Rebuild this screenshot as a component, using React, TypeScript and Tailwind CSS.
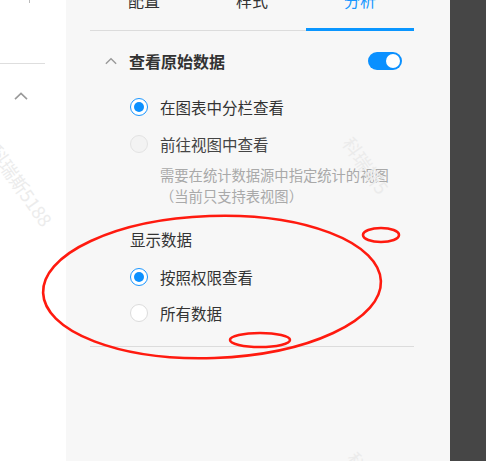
import React from "react";

const font = { fontFamily: '"Noto Sans CJK SC", "Noto Sans", sans-serif' };

function Radio({ checked, disabled, label }: { checked?: boolean; disabled?: boolean; label: string }) {
  return (
    <div className="flex items-center h-[22px] gap-3">
      <span
        className={
          "w-[18px] h-[18px] rounded-full border flex items-center justify-center shrink-0 " +
          (checked
            ? "border-[#1a96ff] bg-white"
            : disabled
            ? "border-[#e3e3e3] bg-[#f3f3f3]"
            : "border-[#dcdcdc] bg-white")
        }
      >
        {checked && <span className="w-[10px] h-[10px] rounded-full bg-[#0a90ff]" />}
      </span>
      <span className={"text-[15.5px] leading-[22px] " + (disabled ? "text-[#444]" : "text-[#333]")}>{label}</span>
    </div>
  );
}

function ChevronUp({ className }: { className?: string }) {
  return (
    <svg viewBox="0 0 14 8" className={className} fill="none" stroke="currentColor" strokeWidth="1.6">
      <path d="M1 7.2 L7 1.4 L13 7.2" />
    </svg>
  );
}

export default function App() {
  return (
    <div className="relative w-[486px] h-[461px] overflow-hidden flex bg-white" style={font}>
      {/* left panel */}
      <div className="w-[66px] shrink-0 bg-white relative">
        <div className="absolute left-[29px] top-0 w-px h-[3px] bg-[#bbb]" />
        <div className="mt-[63px] w-[45px] h-px bg-[#dedede]" />
        <div className="pl-[14px] pt-[28px] text-[#9a9a9a]">
          <ChevronUp className="w-[14px] h-[8px]" />
        </div>
      </div>

      {/* middle panel */}
      <div className="w-[384px] shrink-0 bg-[#f7f7f7] pl-6 pr-9">
        {/* tabs */}
        <div className="mt-[-11px] flex border-b border-[#dcdcdc]">
          {["配置", "样式", "分析"].map((t, i) => (
            <div
              key={t}
              className={
                "relative flex-1 h-[41px] text-center text-[16px] leading-[22px] " +
                (i === 2 ? "text-[#1896ff]" : "text-[#333]")
              }
            >
              {t}
              {i === 2 && <span className="absolute left-0 right-0 bottom-[-1px] h-[3px] bg-[#0a96ff]" />}
            </div>
          ))}
        </div>

        {/* section */}
        <div className="pl-[15px]">
          <div className="mt-[18px] h-6 flex items-center">
            <ChevronUp className="w-[12px] h-[8px] text-[#999] mr-3" />
            <span className="text-[16px] font-semibold text-[#333] leading-6">查看原始数据</span>
            <div className="ml-auto mr-[12px] w-[34px] h-[18px] rounded-full bg-[#0a90ff] flex items-center justify-end pr-[2px]">
              <span className="w-[14px] h-[14px] rounded-full bg-white" />
            </div>
          </div>

          <div className="pl-[25px]">
            <div className="mt-[23px]">
              <Radio checked label="在图表中分栏查看" />
            </div>
            <div className="mt-[15px]">
              <Radio disabled label="前往视图中查看" />
            </div>
            <div className="mt-[9px] pl-[30px] text-[14.3px] leading-[21px] text-[#a9a9a9]">
              <div>需要在统计数据源中指定统计的视图</div>
              <div>（当前只支持表视图）</div>
            </div>

            <div className="mt-[22px] text-[15.5px] leading-[22px] text-[#333]">显示数据</div>
            <div className="mt-[16px]">
              <Radio checked label="按照权限查看" />
            </div>
            <div className="mt-[14px]">
              <Radio label="所有数据" />
            </div>
          </div>
        </div>
        <div className="mt-[22px] h-px bg-[#dcdcdc]" />
      </div>

      {/* right dark panel */}
      <div className="flex-1 bg-[#464646]" />

      {/* watermarks */}
      <span className="absolute left-[-26px] top-[172px] rotate-[55deg] text-[18px] text-[#ececec] whitespace-nowrap pointer-events-none">
        科瑞斯5188
      </span>
      <span className="absolute left-[334px] top-[152px] rotate-[55deg] text-[18px] text-[#ebebeb] whitespace-nowrap pointer-events-none">
        科瑞斯5
      </span>
      <span className="absolute left-[348px] top-[448px] rotate-[55deg] text-[18px] text-[#ebebeb] whitespace-nowrap pointer-events-none">
        科
      </span>

      {/* red annotation marks */}
      <svg className="absolute inset-0 pointer-events-none" width="486" height="461" fill="none" stroke="#ff1a0f" strokeWidth="2.6">
        <ellipse cx="212" cy="287" rx="169" ry="71" transform="rotate(-2 212 287)" />
        <ellipse cx="381" cy="235" rx="18" ry="7" />
        <ellipse cx="260" cy="340" rx="30" ry="7" />
      </svg>
    </div>
  );
}
